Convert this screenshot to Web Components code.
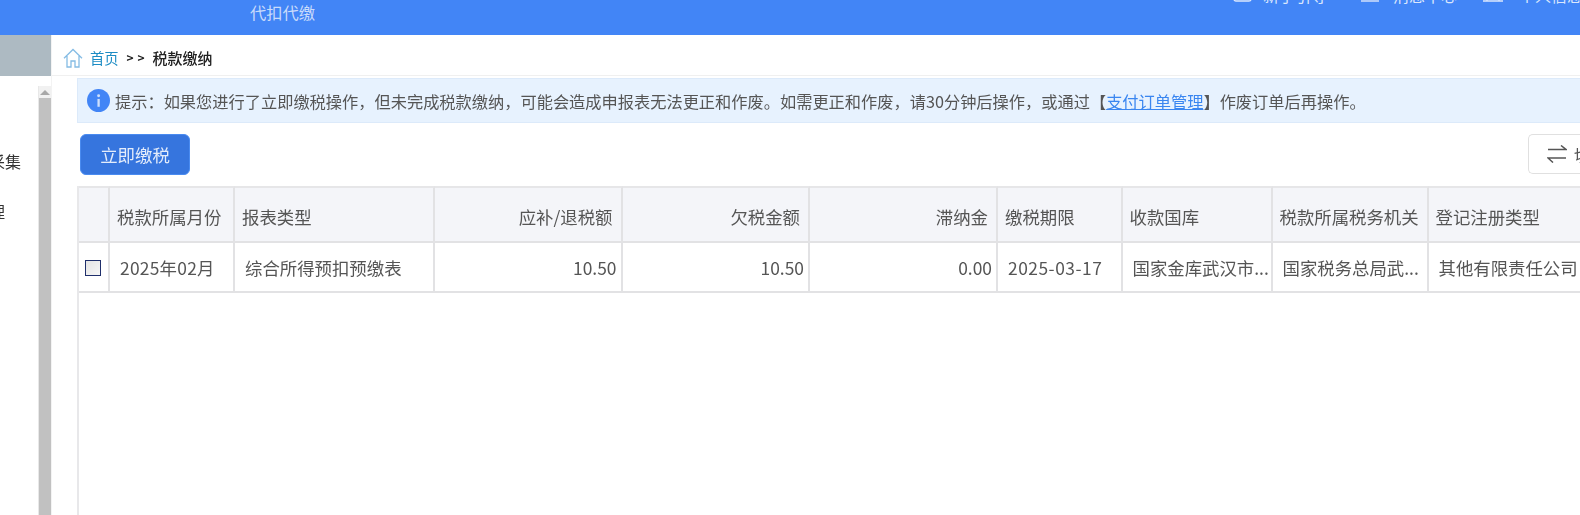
<!DOCTYPE html>
<html lang="zh"><head><meta charset="utf-8"><style>
html,body{margin:0;padding:0;height:515px;overflow:hidden;background:#fff}
body{font-family:"Noto Sans CJK SC","Open Sans",sans-serif}
</style></head><body>
<tax-app></tax-app>
<script>
function def(name,html){customElements.define(name,class extends HTMLElement{constructor(){super();this.attachShadow({mode:'open'}).innerHTML=html;}});}
const F='"Noto Sans CJK SC",sans-serif';
def('top-bar',`<style>:host{display:flex;flex:none;height:35px;background:#4285f6;overflow:hidden;font-family:${F};color:#c9dbfb}
.t{margin-left:250px;font-size:16.25px;line-height:24px;height:24px;flex:none;white-space:nowrap}
.r{display:flex;flex:none;margin-left:918px;margin-top:-16px;font-size:16px;line-height:22px;height:22px;color:#dbe7fd;white-space:nowrap}
.i{display:flex;flex:none}
.a{margin-right:33px}.b{margin-right:25px}
svg{height:16px;flex:none;align-self:flex-end;margin-bottom:4px;fill:none;stroke:#dbe7fd;stroke-width:1.4}</style>
<div class="t">代扣代缴</div>
<div class="r"><span class="i a"><svg style="width:19px;margin-right:11px" viewBox="0 0 19 16"><rect x="1" y="1" width="17" height="14" rx="2"/></svg>新手引导</span><span class="i b"><svg style="width:20px;margin-right:13px" viewBox="0 0 20 16"><path d="M1 15h18"/></svg>消息中心</span><span class="i"><svg style="width:22px;margin-right:15px" viewBox="0 0 22 16"><path d="M5 8v7M17 8v7M1 15h20"/></svg>个人信息</span></div>`);
def('side-bar',`<style>:host{display:flex;flex-direction:column;width:52px;flex:none;font-family:${F};font-size:16px;color:#333;box-sizing:border-box;border-right:1px solid #f3f3f3}
.top{height:41px;background:#adbac2;flex:none}
.body{flex:1;display:flex;min-height:0;padding-top:10px}
.list{width:38px;flex:none;overflow:hidden;padding-top:64px}
.list div{height:50px;line-height:22px;white-space:nowrap;display:flex;justify-content:flex-end}
.a{padding-right:17px}.b{padding-right:33px}
.list span{flex:none}
.sb{width:13px;box-sizing:border-box;background:#c1c1c1;flex:none;border-left:1px solid #e8e8e8}
.up{height:12px;background:#f1f1f1;display:flex;align-items:center;justify-content:center}
.up i{display:block;width:0;height:0;border:5px solid transparent;border-top:0;border-bottom:5px solid #a8a8a8}</style>
<div class="top"></div><div class="body"><div class="list"><div class="a"><span>数据采集</span></div><div class="b"><span>报表管理</span></div></div><div class="sb"><div class="up"><i></i></div></div></div>`);
def('bread-crumb',`<style>:host{display:flex;flex:none;align-items:center;height:41px;box-sizing:border-box;border-bottom:1px solid #f0f0f0;padding:5px 0 0 11px;font-family:${F};font-size:14.300px;color:#222}
svg{width:20px;height:20px;flex:none;fill:none;stroke:#85bce4;stroke-width:1.300;margin-right:7px}
a{color:#1c8cc4;text-decoration:none;margin-right:8px}
.s{font-size:12px;font-weight:700;width:19px;word-spacing:1px;margin-right:7px;white-space:nowrap}
b{font-weight:500;font-size:15px}</style>
<svg viewBox="0 0 20 20"><path d="M1 10.200 10 1.500l9 8.700M4 8v11h4v-6h4v6h4V8"/></svg><a>首页</a><span class="s">&gt; &gt;</span><b>税款缴纳</b>`);
def('tip-bar',`<style>:host{display:flex;flex:none;align-items:center;height:45px;box-sizing:border-box;margin:2px 0 0 25px;background:#e7f2fe;border:1px solid #dceafa;border-width:1px 0 1px 1px;padding-left:9px;font-family:${F};font-size:16.230px;color:#555;white-space:nowrap}
svg{width:23px;height:23px;flex:none;margin-right:5px}
a{color:#3a86f0;text-decoration:underline}</style>
<svg viewBox="0 0 22 22"><circle cx="11" cy="11" r="11" fill="#4285f6"/><rect x="10" y="9.500" width="2.200" height="7.500" fill="#cfe0fc"/><circle cx="11.100" cy="6.500" r="1.400" fill="#cfe0fc"/></svg><span>提示：如果您进行了立即缴税操作，但未完成税款缴纳，可能会造成申报表无法更正和作废。如需更正和作废，请30分钟后操作，或通过【<a>支付订单管理</a>】作废订单后再操作。</span>`);
def('tool-row',`<style>:host{display:flex;flex:none;justify-content:space-between;height:41px;margin:11px 0 0 28px;font-family:${F};font-size:17.400px}
.p{width:110px;box-sizing:border-box;background:#3675de;border:1px solid #4a8bf0;border-radius:6px;color:#e3ecfb;display:flex;align-items:center;justify-content:center;height:41px}
.s{width:52px;box-sizing:border-box;border:1px solid #e0e0e0;border-right:0;border-radius:5px 0 0 5px;display:flex;align-items:center;padding-left:18px;overflow:hidden;white-space:nowrap;color:#555;height:40px}
svg{width:20px;height:18px;flex:none;fill:none;stroke:#555;stroke-width:1.500;margin-right:7px}</style>
<div class="p">立即缴税</div><div class="s"><svg viewBox="0 0 20 18"><path d="M1 4.500h18L14 .5M19 13H1l5 4.500"/></svg>切换</div>`);
def('tax-table',`<style>:host{display:block;flex:none;margin:11px 0 0 25px;height:330px;border-left:2px solid #e8e8ea;overflow:hidden;font-family:${F};font-size:17.400px;color:#555}
.g{display:grid;grid-template-columns:31px 125px 200px 187.500px 187.500px 188px 124.500px 150px 156px 151.500px;width:1501px}
.g>div{box-sizing:border-box;display:flex;align-items:center;white-space:nowrap;border-right:2px solid #e2e2e4;border-bottom:2px solid #e2e2e4;overflow:hidden}
.h{height:57px;background:#f4f5f9;border-top:2px solid #e6e6e8;padding:3px 8px 0 7px}
.c{height:50px;padding:0 4px 0 10px}
.r{justify-content:flex-end}
.n{padding:0!important;justify-content:center}
.cb{width:16px;height:16px;box-sizing:border-box;border:1.500px solid #1f2f6b;background:linear-gradient(135deg,#e4e4e4,#f6f6f6);display:block;margin:1px 2px 0 0}
.nr{border-right:0!important}
</style><div class="g">
<div class="h n"></div><div class="h">税款所属月份</div><div class="h">报表类型</div><div class="h r">应补/退税额</div><div class="h r">欠税金额</div><div class="h r">滞纳金</div><div class="h">缴税期限</div><div class="h">收款国库</div><div class="h">税款所属税务机关</div><div class="h nr">登记注册类型</div>
<div class="c n"><i class="cb"></i></div><div class="c" style="letter-spacing:.25px">2025年02月</div><div class="c">综合所得预扣预缴表</div><div class="c r">10.50</div><div class="c r">10.50</div><div class="c r">0.00</div><div class="c" style="letter-spacing:.5px">2025-03-17</div><div class="c">国家金库武汉市...</div><div class="c">国家税务总局武...</div><div class="c nr">其他有限责任公司</div>
</div>`);
def('main-pane',`<style>:host{flex:1;min-width:0;display:flex;flex-direction:column;overflow:hidden}</style><bread-crumb></bread-crumb><tip-bar></tip-bar><tool-row></tool-row><tax-table></tax-table>`);
def('tax-app',`<style>:host{display:flex;flex-direction:column;width:1580px;height:515px;overflow:hidden;filter:blur(.35px)}.b{flex:1;display:flex;min-height:0}</style><top-bar></top-bar><div class="b"><side-bar></side-bar><main-pane></main-pane></div>`);
</script></body></html>
